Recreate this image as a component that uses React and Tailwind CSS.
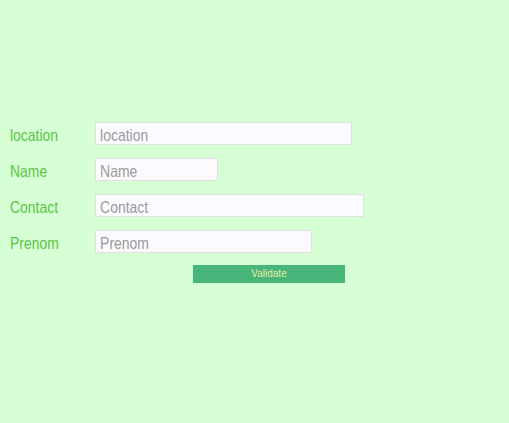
import React from 'react';

// inner widths are (box - 2) / 0.82 so the scaled input fills the bordered box
const fields = [
  { label: 'location', box: 'w-[257px]', inner: 'w-[311px]' },
  { label: 'Name', box: 'w-[123px]', inner: 'w-[148px]' },
  { label: 'Contact', box: 'w-[269px]', inner: 'w-[326px]' },
  { label: 'Prenom', box: 'w-[217px]', inner: 'w-[262px]' },
];

const App = () => {
  return (
    <div
      className="w-[509px] h-[423px] bg-[#d6ffd6] pt-[122px] pl-[10px]"
      style={{ fontFamily: '"Liberation Sans", Arial, sans-serif' }}
    >
      <form className="flex flex-col gap-[13px]" onSubmit={(e) => e.preventDefault()}>
        {fields.map((f) => (
          <div key={f.label} className="flex items-center h-[23px]">
            <div className="w-[85px] pt-[4px]">
              <label className="inline-block origin-left scale-x-[0.82] text-[17px] text-[#5cc445]">{f.label}</label>
            </div>
            <div className={`${f.box} h-[23px] bg-[#fbfaff] border border-[#e0e0e0] overflow-hidden`}>
              <input
                type="text"
                placeholder={f.label}
                className={`${f.inner} h-[21px] origin-left scale-x-[0.82] bg-transparent pl-[5px] pt-[4px] text-[17px] placeholder-[#9a9a9a] outline-none`}
              />
            </div>
          </div>
        ))}
        <div className="flex pl-[183px] -mt-[1px]">
          <button
            type="submit"
            className="w-[152px] h-[18px] bg-[#48b67a] text-[#e6eaa6] text-[10px] leading-none"
          >
            Validate
          </button>
        </div>
      </form>
    </div>
  );
};

export default App;
